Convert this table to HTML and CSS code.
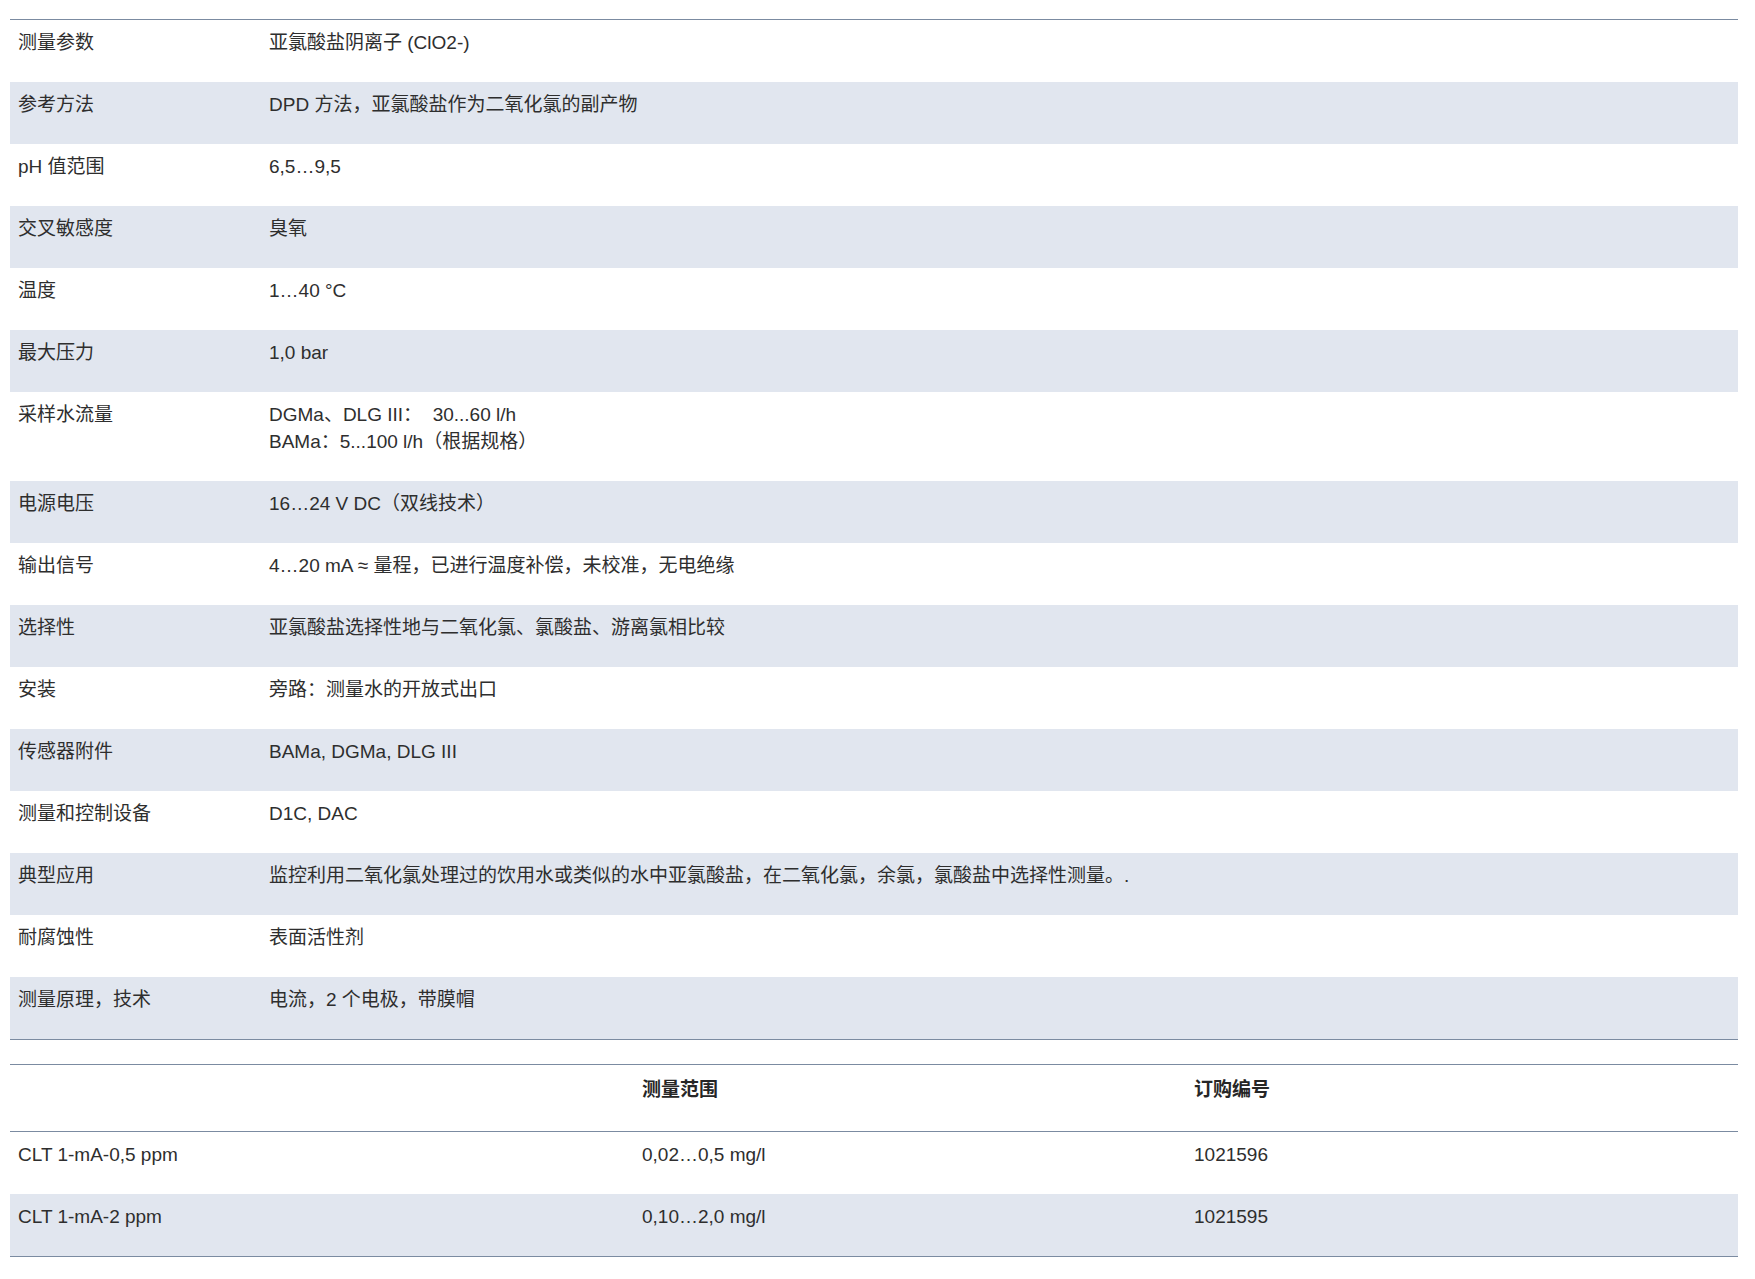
FILE: index.html
```html
<!DOCTYPE html>
<html lang="zh">
<head>
<meta charset="utf-8">
<title>亚氯酸盐传感器</title>
<link rel="stylesheet" href="styles.css">
</head>
<body>
<div class="page">
  <table class="specs">
    <colgroup><col class="c-label"><col class="c-value"></colgroup>
    <tbody>
      <tr><td>测量参数</td><td>亚氯酸盐阴离子 (ClO2-)</td></tr>
      <tr><td>参考方法</td><td>DPD 方法，亚氯酸盐作为二氧化氯的副产物</td></tr>
      <tr><td>pH 值范围</td><td>6,5…9,5</td></tr>
      <tr><td>交叉敏感度</td><td>臭氧</td></tr>
      <tr><td>温度</td><td>1…40 °C</td></tr>
      <tr><td>最大压力</td><td>1,0 bar</td></tr>
      <tr><td>采样水流量</td><td>DGMa、DLG III：&nbsp;&nbsp;30...60 l/h<br>BAMa：5...100 l/h（根据规格）</td></tr>
      <tr><td>电源电压</td><td>16…24 V DC（双线技术）</td></tr>
      <tr><td>输出信号</td><td>4…20 mA ≈ 量程，已进行温度补偿，未校准，无电绝缘</td></tr>
      <tr><td>选择性</td><td>亚氯酸盐选择性地与二氧化氯、氯酸盐、游离氯相比较</td></tr>
      <tr><td>安装</td><td>旁路：测量水的开放式出口</td></tr>
      <tr><td>传感器附件</td><td>BAMa, DGMa, DLG III</td></tr>
      <tr><td>测量和控制设备</td><td>D1C, DAC</td></tr>
      <tr><td>典型应用</td><td>监控利用二氧化氯处理过的饮用水或类似的水中亚氯酸盐，在二氧化氯，余氯，氯酸盐中选择性测量。.</td></tr>
      <tr><td>耐腐蚀性</td><td>表面活性剂</td></tr>
      <tr><td>测量原理，技术</td><td>电流，2 个电极，带膜帽</td></tr>
    </tbody>
  </table>

  <table class="order">
    <colgroup><col class="o1"><col class="o2"><col class="o3"></colgroup>
    <thead>
      <tr><th></th><th>测量范围</th><th>订购编号</th></tr>
    </thead>
    <tbody>
      <tr><td>CLT 1-mA-0,5 ppm</td><td>0,02…0,5 mg/l</td><td>1021596</td></tr>
      <tr><td>CLT 1-mA-2 ppm</td><td>0,10…2,0 mg/l</td><td>1021595</td></tr>
    </tbody>
  </table>
</div>
</body>
</html>
```
FILE: styles.css
```css
html, body {
  margin: 0;
  padding: 0;
  background: #ffffff;
}

body {
  font-family: "Liberation Sans", Arial, "Noto Sans CJK SC", sans-serif;
  font-size: 19px;
  line-height: 27px;
  color: #2e2e2e;
}

.page {
  width: 1728px;
  margin: 0 0 0 10px;
  padding-top: 19px;
}

table {
  width: 1728px;
  table-layout: fixed;
  border-collapse: separate;
  border-spacing: 0;
  border-top: 1px solid #7b8ba1;
  border-bottom: 1px solid #7b8ba1;
}

td, th {
  padding: 9px 8px 26px 8px;
  text-align: left;
  vertical-align: top;
}

tbody tr:nth-child(even) td {
  background: #e1e6ef;
}

.c-label { width: 251px; }
.c-value { width: 1477px; }

.order {
  margin-top: 24px;
}

.o1 { width: 624px; }
.o2 { width: 552px; }
.o3 { width: 552px; }

.order th {
  font-weight: bold;
  color: #262626;
  padding: 11px 8px 28px 8px;
  border-bottom: 1px solid #7b8ba1;
}
```
